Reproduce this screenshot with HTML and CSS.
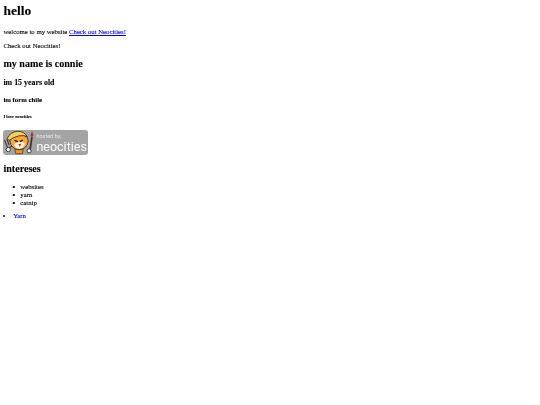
FILE: index.html
```html
<!DOCTYPE html>
<html lang="en">
<head>
  <meta charset="UTF-8" />
  <title>hello</title>
  <link rel="stylesheet" href="styles.css">
</head>
<body>

  <h1>hello</h1>
  <p>welcome to my website <a href="#">Check out Neocities!</a></p>
  <p>Check out Neocities!</p>

  <h2>my name is connie</h2>
  <h3>im 15 years old</h3>
  <h4>im form chile</h4>
  <h6>I love neocities</h6>

  <a class="badge" href="#">
    <svg class="badge-cat" viewBox="0 0 78 60" width="33" height="25">
      <!-- fork and arm on the left -->
      <path d="M3 24 L11 44 M9 22 L14 36 M14 42 L30 36" stroke="#333" stroke-width="2.500" fill="none"/>
      <!-- brush -->
      <path d="M64 50 L69 16" stroke="#4a2a20" stroke-width="4"/>
      <path d="M69 2 L73 15 L65 15 Z" fill="#a8323a"/>
      <!-- head -->
      <path d="M16 26 Q18 46 38 47 Q58 46 60 26 Q58 10 38 10 Q18 10 16 26 Z" fill="#f3a93f" stroke="#33240f" stroke-width="2"/>
      <!-- hat -->
      <path d="M9 21 Q16 5 34 3 Q50 3 58 16 Q38 8 14 25 Z" fill="#f6cf5e" stroke="#33240f" stroke-width="2"/>
      <!-- face -->
      <path d="M26 34 Q38 24 52 32 Q50 45 38 45 Q28 45 26 34 Z" fill="#fbeedd"/>
      <path d="M27 25 L35 28 M47 24 L40 28" stroke="#201208" stroke-width="3"/>
      <path d="M36 34 L43 33 L40 40 Z" fill="#9c3a2a"/>
      <!-- body and hands -->
      <path d="M28 47 L48 47 L46 57 L30 57 Z" fill="#e8962f" stroke="#33240f" stroke-width="1.500"/>
      <circle cx="12" cy="47" r="5" fill="#fff" stroke="#222" stroke-width="2"/>
      <circle cx="62" cy="50" r="5" fill="#fff" stroke="#222" stroke-width="2"/>
    </svg>
    <span class="badge-text">
      <span class="badge-small">hosted by,</span>
      <span class="badge-big">neocities</span>
    </span>
  </a>

  <h2>intereses</h2>
  <ul>
    <li>websites</li>
    <li>yarn</li>
    <li>catnip</li>
  </ul>
  <li class="loose"><a href="#">Yarn</a></li>

</body>
</html>
```

FILE: styles.css
```css
body { margin: 3.4px; font-family: "Liberation Serif", serif; font-size: 6.75px; line-height: 7.6px; color: #000; background: #fff; filter: blur(0.2px); -webkit-text-stroke: 0.1px; }
h1 { font-size: 13.5px; line-height: 15.6px; margin: 0 0 9px; }
h2 { font-size: 10.1px; line-height: 11.4px; margin: 8.4px 0; }
h3 { font-size: 7.9px; line-height: 9px; margin: 7.9px 0; }
h4 { font-size: 6.75px; line-height: 7.6px; margin: 9px 0; }
h6 { font-size: 4.5px; line-height: 5.3px; margin: 10.5px 0 10px; }
p { margin: 6.75px 0; }
ul { margin: 6.75px 0 5px; padding-left: 16.9px; list-style: none; }
ul li { line-height: 8px; }
ul li::before { content: "•"; display: inline-block; width: 8px; margin-left: -8px; font-size: 9px; line-height: 7px; vertical-align: -1px; }
a { color: #0000ee; }
.loose { list-style-position: inside; }
.badge { display: flex; width: 84.4px; height: 25px; background: #a4a4a4; border-radius: 3px; text-decoration: none; color: #fff; font-family: Roboto, sans-serif; -webkit-text-stroke: 0; }
.badge-cat { flex: none; }
.badge-text { display: flex; flex-direction: column; padding-top: 3.5px; }
.badge-small { font-size: 5.5px; line-height: 7px; color: #e6e6e6; }
.badge-big { font-size: 12.5px; line-height: 14.6px; }
```
